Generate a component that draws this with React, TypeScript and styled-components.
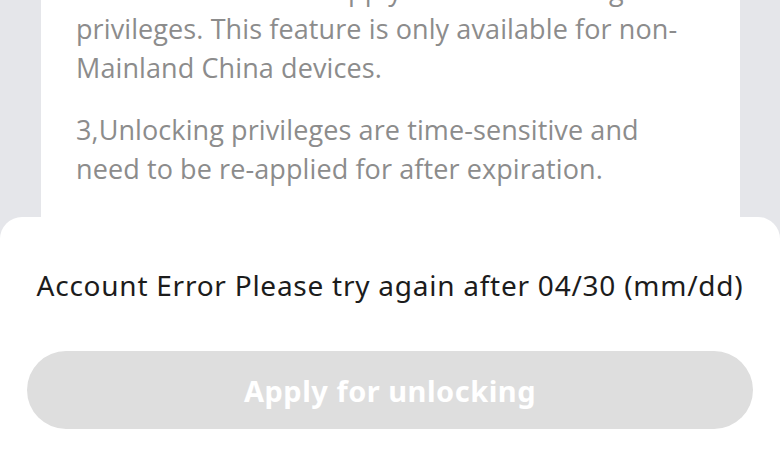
import styled, { createGlobalStyle } from "styled-components";

const GlobalStyle = createGlobalStyle`
  html, body {
    margin: 0;
    padding: 0;
  }
  body {
    background: #e5e6ea;
    font-family: "Open Sans", "Noto Sans", sans-serif;
  }
`;

const Page = styled.div`
  display: flex;
  flex-direction: column;
  height: 471px;
  overflow: hidden;
  background: #e5e6ea;
`;

const Panel = styled.div`
  flex: 1;
  margin: -30px 40px 0 41px;
  padding: 0 33px 0 35px;
  background: #ffffff;
`;

const Note = styled.p`
  margin: 0 0 23px;
  font-family: "Open Sans", sans-serif;
  font-size: 27px;
  line-height: 39px;
  letter-spacing: 0.1px;
  color: #8c8c8c;
`;

const Sheet = styled.div`
  display: flex;
  flex-direction: column;
  align-items: center;
  height: 254px;
  flex-shrink: 0;
  background: #ffffff;
  border-radius: 22px 22px 0 0;
  padding: 0 27px;
`;

const Message = styled.div`
  margin-top: 50px;
  font-family: "Noto Sans", sans-serif;
  font-size: 28px;
  line-height: 36px;
  letter-spacing: 0.75px;
  color: #1c1c1c;
  white-space: nowrap;
`;

const ApplyButton = styled.button`
  width: 100%;
  height: 78px;
  margin-top: 48px;
  border: none;
  border-radius: 39px;
  background: #dedede;
  color: #ffffff;
  font-family: "Noto Sans", sans-serif;
  font-size: 29px;
  font-weight: 700;
  letter-spacing: 0.5px;
  cursor: default;
`;

export default function App() {
  return (
    <>
      <GlobalStyle />
      <Page>
        <Panel>
          <Note>
            Mainland China can apply for the unlocking privileges. This feature
            is only available for non-Mainland China devices.
          </Note>
          <Note>
            3,Unlocking privileges are time-sensitive and need to be re-applied
            for after expiration.
          </Note>
        </Panel>
        <Sheet>
          <Message>Account Error Please try again after 04/30 (mm/dd)</Message>
          <ApplyButton disabled>Apply for unlocking</ApplyButton>
        </Sheet>
      </Page>
    </>
  );
}
